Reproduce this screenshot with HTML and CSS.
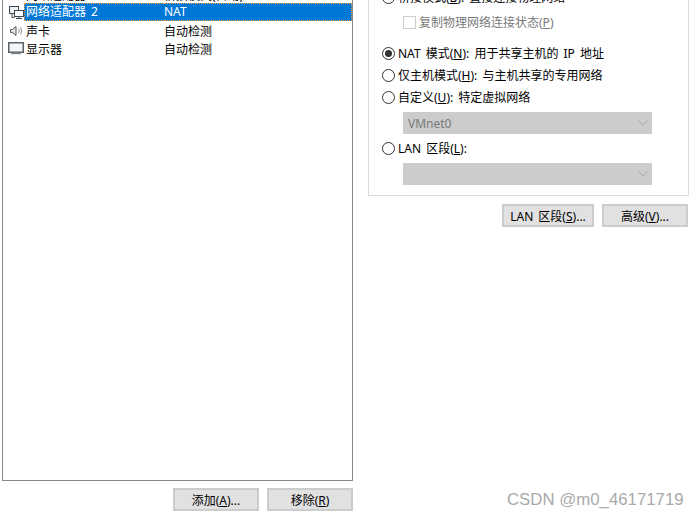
FILE: index.html
```html
<!DOCTYPE html>
<html>

<head>
    <title>网络适配器</title>
    <link rel="stylesheet" href="styles.css">
</head>

<body>

    <div class="dialog">

        <!-- Hardware list -->
        <div class="left-pane">
            <div class="device-list">
                <div class="device-row clipped">
                    <span class="device-icon"></span>
                    <span class="device-name">网络适配器</span>
                    <span class="device-value">桥接模式(自动)</span>
                </div>
                <div class="device-row selected">
                    <span class="device-icon">
                        <svg width="19" height="16" viewBox="0 0 19 16" fill="none" stroke="#3c4650">
                            <rect x="1.500" y="2.500" width="9" height="7" fill="#eef2f6"/>
                            <rect x="6.500" y="6.500" width="9" height="6" fill="#fff"/>
                            <path d="M4 9.500v4h2.500M8 14.500h6M11 12.500v2"/>
                        </svg>
                    </span>
                    <span class="device-name">网络适配器 2</span>
                    <span class="device-value">NAT</span>
                </div>
                <div class="device-row">
                    <span class="device-icon">
                        <svg width="19" height="16" viewBox="0 0 19 16" fill="none" stroke="#50565e">
                            <path d="M2.500 5.500h2l3.500-3v9l-3.500-3h-2z" fill="#e4e4e4"/>
                            <path d="M10.500 5q1.500 2 0 4M12.500 3.500q2.500 3.500 0 7" stroke="#8a9098"/>
                        </svg>
                    </span>
                    <span class="device-name">声卡</span>
                    <span class="device-value">自动检测</span>
                </div>
                <div class="device-row">
                    <span class="device-icon">
                        <svg width="19" height="16" viewBox="0 0 19 16" fill="none" stroke="#5a6068">
                            <rect x="0.750" y="0.750" width="14.500" height="9.500" fill="#f4f4f4" stroke-width="1.500"/>
                            <path d="M3 11.500h10" stroke-width="1.500" stroke="#8a9098"/>
                        </svg>
                    </span>
                    <span class="device-name">显示器</span>
                    <span class="device-value">自动检测</span>
                </div>
            </div>
            <div class="button-row">
                <button class="btn">添加(<u>A</u>)...</button>
                <button class="btn">移除(<u>R</u>)</button>
            </div>
        </div>

        <!-- Network connection options -->
        <div class="right-pane">
            <div class="group-box">
                <div class="option clipped-option">
                    <span class="radio"></span>
                    <span>桥接模式(<u>B</u>): 直接连接物理网络</span>
                </div>
                <div class="check-option">
                    <span class="checkbox"></span>
                    <span>复制物理网络连接状态(<u>P</u>)</span>
                </div>
                <div class="option nat-option">
                    <span class="radio checked"></span>
                    <span>NAT 模式(<u>N</u>): 用于共享主机的 IP 地址</span>
                </div>
                <div class="option">
                    <span class="radio"></span>
                    <span>仅主机模式(<u>H</u>): 与主机共享的专用网络</span>
                </div>
                <div class="option">
                    <span class="radio"></span>
                    <span>自定义(<u>U</u>): 特定虚拟网络</span>
                </div>
                <div class="select first-select">
                    <span>VMnet0</span>
                    <svg width="10" height="6" viewBox="0 0 10 6" fill="none" stroke="#a6a6a6"><path d="M0.500 0.500l4.500 4.500 4.500-4.500"/></svg>
                </div>
                <div class="option lan-option">
                    <span class="radio"></span>
                    <span>LAN 区段(<u>L</u>):</span>
                </div>
                <div class="select">
                    <span></span>
                    <svg width="10" height="6" viewBox="0 0 10 6" fill="none" stroke="#a6a6a6"><path d="M0.500 0.500l4.500 4.500 4.500-4.500"/></svg>
                </div>
            </div>
            <div class="button-row right-buttons">
                <button class="btn btn-lan">LAN 区段(<u>S</u>)...</button>
                <button class="btn">高级(<u>V</u>)...</button>
            </div>
        </div>

    </div>

    <div class="watermark">CSDN @m0_46171719</div>

</body>

</html>
```

FILE: styles.css
```css
html,
body {
    height: 100%;
}

body {
    margin: 0;
    background-color: #fff;
    color: #000;
    font-family: "Noto Sans", "Noto Sans CJK SC", sans-serif;
    font-size: 12px;
    word-spacing: 2px;
    overflow: hidden;
}

u {
    text-underline-offset: 1px;
}

.dialog {
    display: flex;
    gap: 15px;
    height: 518px;
    padding-left: 2px;
}

.left-pane {
    width: 351px;
    display: flex;
    flex-direction: column;
}

.device-list {
    height: 481px;
    box-sizing: border-box;
    border: 1px solid #828790;
    border-top: none;
    overflow: hidden;
}

.device-row {
    display: flex;
    align-items: center;
    height: 18px;
    line-height: 18px;
    white-space: nowrap;
}

.device-row.clipped {
    margin-top: -15px;
    height: 18px;
    padding-top: 4px;
    box-sizing: border-box;
    overflow: hidden;
}

.device-icon {
    width: 21px;
    height: 16px;
    padding-left: 5px;
    flex: none;
    box-sizing: border-box;
}

.device-icon svg {
    display: block;
}

.device-name {
    width: 140px;
    padding-left: 2px;
    box-sizing: border-box;
    flex: none;
}

.device-row.selected {
    margin-bottom: 2px;
}

.device-row.selected .device-name,
.device-row.selected .device-value {
    color: #fff;
    background-color: #0078d7;
    height: 18px;
    box-sizing: border-box;
    border-top: 1px dotted #f0a040;
    border-bottom: 1px dotted #f0a040;
    line-height: 16px;
}

.device-row.selected .device-name {
    border-left: 1px dotted #f0a040;
    padding-left: 1px;
}

.device-row.selected .device-value {
    flex: 1;
    border-right: 1px dotted #f0a040;
}

.button-row {
    display: flex;
    justify-content: flex-end;
    gap: 8px;
}

.left-pane .button-row {
    margin-top: 7px;
}

.btn {
    width: 86px;
    height: 23px;
    padding: 2px 0 0;
    box-sizing: border-box;
    border: 2px solid #cccccc;
    border-radius: 0;
    background-color: #e1e1e1;
    color: #000;
    font-family: inherit;
    font-size: 12px;
    word-spacing: 2px;
    line-height: 17px;
}

.btn-lan {
    width: 92px;
}

.right-pane {
    width: 321px;
}

.group-box {
    height: 196px;
    box-sizing: border-box;
    border: 1px solid #dcdcdc;
    border-top: none;
    padding-left: 13px;
    overflow: hidden;
}

.option {
    display: flex;
    align-items: center;
    gap: 3px;
    height: 22px;
    white-space: nowrap;
}

.clipped-option {
    margin-top: -14px;
}

.nat-option {
    margin-top: 9px;
}

.first-select {
    margin-top: 4px;
}

.lan-option {
    margin-top: 3px;
    margin-bottom: 4px;
}

.radio {
    width: 13px;
    height: 13px;
    box-sizing: border-box;
    border: 1px solid #333;
    border-radius: 50%;
    background-color: #fff;
    flex: none;
    display: flex;
    align-items: center;
    justify-content: center;
}

.radio.checked::after {
    content: "";
    width: 7px;
    height: 7px;
    border-radius: 50%;
    background-color: #333;
}

.check-option {
    display: flex;
    align-items: center;
    gap: 3px;
    height: 22px;
    margin-top: 3px;
    padding-left: 21px;
    color: #7a7a7a;
    white-space: nowrap;
}

.checkbox {
    width: 13px;
    height: 13px;
    box-sizing: border-box;
    border: 1px solid #ccc;
    background-color: #fff;
    flex: none;
}

.select {
    width: 249px;
    height: 22px;
    margin-left: 21px;
    box-sizing: border-box;
    padding: 0 4px 0 5px;
    display: flex;
    align-items: center;
    justify-content: space-between;
    background-color: #cccccc;
    color: #7a7a7a;
}

.right-buttons {
    margin-top: 8px;
    padding-right: 1px;
}

.watermark {
    position: absolute;
    left: 507px;
    top: 491px;
    font-family: "Liberation Sans", sans-serif;
    font-size: 16.8px;
    word-spacing: 0;
    line-height: 18px;
    color: #aaa;
    white-space: nowrap;
}
```
